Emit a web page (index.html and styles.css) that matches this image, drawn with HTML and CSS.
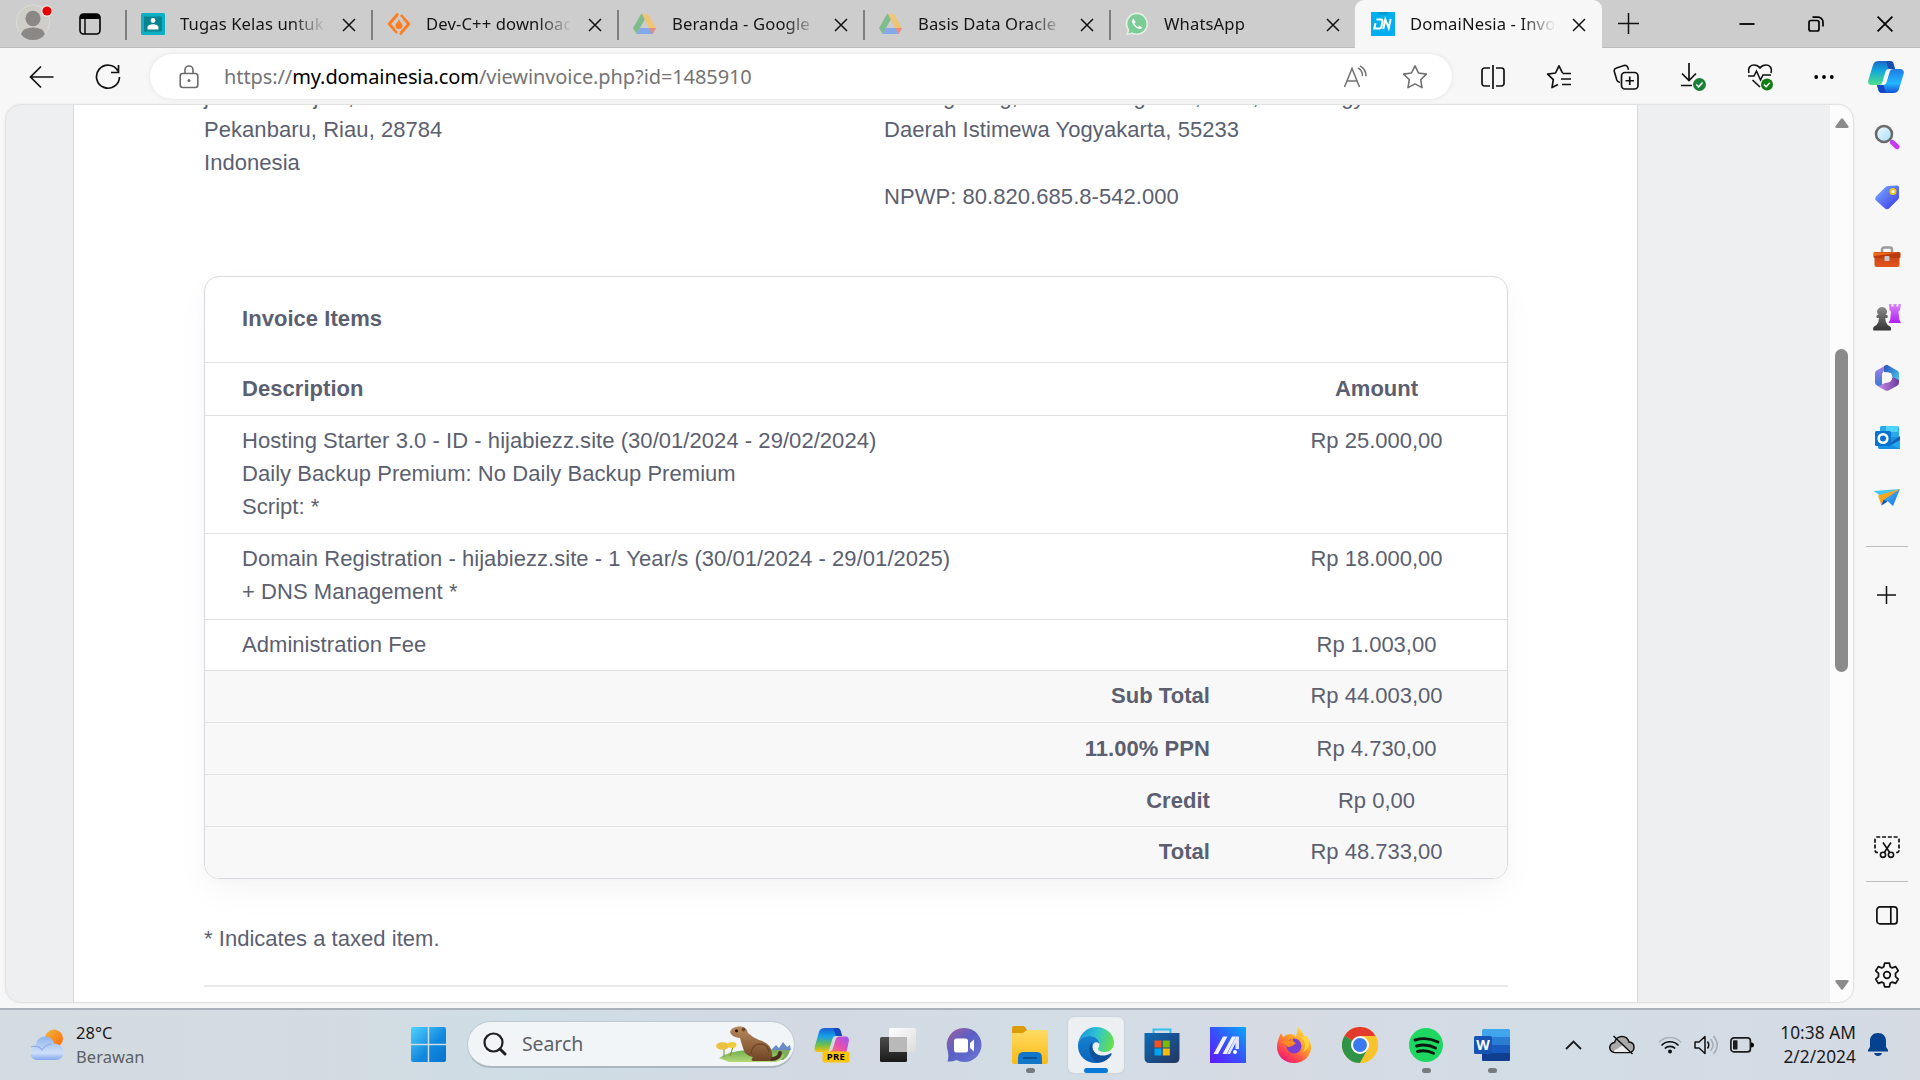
FILE: index.html
```html
<!DOCTYPE html>
<html lang="en">
<head>
<meta charset="utf-8">
<title>DomaiNesia - Invoice</title>
<link rel="stylesheet" href="styles.css">
</head>
<body>
<svg class="defs" width="0" height="0" aria-hidden="true">
  <defs>
    <symbol id="x" viewBox="0 0 14 14"><path d="M1 1l12 12M13 1L1 13" stroke="#111" stroke-width="1.5" fill="none"/></symbol>
    <symbol id="drive" viewBox="0 0 24 22"><path d="M8 1h7L7 15l-3.500 6L0 15z" fill="#7fbb8c"/><path d="M9 1h6l8 14h-7.200z" fill="#eec576"/><path d="M7 15h16l-3.500 6h-16z" fill="#85a9e8"/><path d="M16 15h7l-3.500 6z" fill="#e78c80"/><path d="M11.600 7.500l4.200 7.500H7.200z" fill="#cdcdcd"/></symbol>
    <linearGradient id="gCopA" x1="0" y1="0" x2="0" y2="1"><stop offset="0" stop-color="#1b66c9"/><stop offset=".4" stop-color="#10a7dc"/><stop offset="1" stop-color="#4fe08a"/></linearGradient>
    <linearGradient id="gCopB" x1="0" y1="0" x2="0" y2="1"><stop offset="0" stop-color="#1f7be6"/><stop offset=".6" stop-color="#22b6ff"/><stop offset="1" stop-color="#1550d4"/></linearGradient>
    <linearGradient id="gPreA" x1="0" y1="0" x2="0" y2="1"><stop offset="0" stop-color="#1a5fd8"/><stop offset=".35" stop-color="#16a0e8"/><stop offset=".7" stop-color="#6cbf4a"/><stop offset="1" stop-color="#fbc40a"/></linearGradient>
    <linearGradient id="gPreB" x1="1" y1="0" x2="0" y2="1"><stop offset="0" stop-color="#9a55f5"/><stop offset=".5" stop-color="#e550b0"/><stop offset="1" stop-color="#ff8a4a"/></linearGradient>
    <linearGradient id="gTag" x1="0" y1="0" x2="1" y2="1"><stop offset="0" stop-color="#7db4ff"/><stop offset="1" stop-color="#3a32e8"/></linearGradient>
    <linearGradient id="gGlass" x1="0" y1="0" x2="1" y2="1"><stop offset="0" stop-color="#f2fbff"/><stop offset="1" stop-color="#a9dcf7"/></linearGradient>
    <linearGradient id="gBox" x1="0" y1="0" x2="0" y2="1"><stop offset="0" stop-color="#c94215"/><stop offset="1" stop-color="#e2561f"/></linearGradient>
    <linearGradient id="gPawn" x1="0" y1="0" x2="0" y2="1"><stop offset="0" stop-color="#8c8c8c"/><stop offset="1" stop-color="#333"/></linearGradient>
    <linearGradient id="gRook" x1="0" y1="0" x2="0" y2="1"><stop offset="0" stop-color="#d985f5"/><stop offset="1" stop-color="#b01ff5"/></linearGradient>
    <linearGradient id="gM1" x1="0" y1="0" x2="0" y2="1"><stop offset="0" stop-color="#b07fe0"/><stop offset="1" stop-color="#2a7ad8"/></linearGradient>
    <linearGradient id="gM2" x1="0" y1="0" x2="1" y2="1"><stop offset="0" stop-color="#2a50b8"/><stop offset="1" stop-color="#48d0f5"/></linearGradient>
    <linearGradient id="gM3" x1="0" y1="0" x2="1" y2="0"><stop offset="0" stop-color="#c98ae6"/><stop offset="1" stop-color="#6a3aa0"/></linearGradient>
    <linearGradient id="gPlane" x1="0" y1="0" x2="1" y2="1"><stop offset="0" stop-color="#45c6f5"/><stop offset="1" stop-color="#1f6ee8"/></linearGradient>
    <linearGradient id="gSun" x1="0" y1="0" x2="1" y2="1"><stop offset="0" stop-color="#f2b53a"/><stop offset="1" stop-color="#fb6a0a"/></linearGradient>
    <linearGradient id="gCloud" x1="0" y1="0" x2="0" y2="1"><stop offset="0" stop-color="#8fb4ee"/><stop offset=".7" stop-color="#cfdff8"/><stop offset="1" stop-color="#82a8ee"/></linearGradient>
    <linearGradient id="gWin" gradientUnits="userSpaceOnUse" x1="0" y1="0" x2="35" y2="35"><stop offset="0" stop-color="#4fd3ff"/><stop offset=".55" stop-color="#138bdf"/><stop offset="1" stop-color="#0672cf"/></linearGradient>
    <linearGradient id="gChat" x1="0" y1="0" x2="1" y2="1"><stop offset="0" stop-color="#a05f9c"/><stop offset=".45" stop-color="#5b5fc4"/><stop offset="1" stop-color="#6878d6"/></linearGradient>
    <linearGradient id="gFold" x1="0" y1="0" x2="0" y2="1"><stop offset="0" stop-color="#ffdc63"/><stop offset="1" stop-color="#fbb917"/></linearGradient>
    <linearGradient id="gEdge1" x1="0" y1=".3" x2="1" y2=".5"><stop offset="0" stop-color="#1793e0"/><stop offset=".5" stop-color="#2fc4d0"/><stop offset="1" stop-color="#67e04a"/></linearGradient>
    <linearGradient id="gEdge2" x1="0" y1="0" x2="0" y2="1"><stop offset="0" stop-color="#1583cf"/><stop offset="1" stop-color="#0a62bb"/></linearGradient>
    <linearGradient id="gStore" x1="0" y1="0" x2="1" y2="1"><stop offset="0" stop-color="#0f6bb8"/><stop offset="1" stop-color="#253560"/></linearGradient>
    <linearGradient id="gAsus" x1="1" y1="0" x2="0" y2="1"><stop offset="0" stop-color="#06aaff"/><stop offset=".5" stop-color="#3553fb"/><stop offset="1" stop-color="#6218fa"/></linearGradient>
    <linearGradient id="gFox" x1=".9" y1="0" x2=".2" y2="1"><stop offset="0" stop-color="#fff04a"/><stop offset=".45" stop-color="#ff9a2a"/><stop offset=".8" stop-color="#ff3a55"/><stop offset="1" stop-color="#e31587"/></linearGradient>
    <linearGradient id="gHog" x1="0" y1="0" x2="0" y2="1"><stop offset="0" stop-color="#b98b60"/><stop offset="1" stop-color="#6f4424"/></linearGradient>
    <linearGradient id="gHill" x1="0" y1="0" x2="0" y2="1"><stop offset="0" stop-color="#6fae4e"/><stop offset="1" stop-color="#b5d878"/></linearGradient>
    <linearGradient id="gDark" x1="0" y1="0" x2="0" y2="1"><stop offset="0" stop-color="#4c4c4c"/><stop offset="1" stop-color="#1a1a1a"/></linearGradient>
    <linearGradient id="gLite" x1="0" y1="0" x2="1" y2="1"><stop offset="0" stop-color="#fff"/><stop offset="1" stop-color="#dcdcdc"/></linearGradient>
  </defs>
</svg>

<div class="screen">
  <header class="tabs">
    <div class="profile"><svg width="36" height="42" viewBox="0 0 36 42"><defs><clipPath id="av"><ellipse cx="17" cy="22" rx="16" ry="19.500"/></clipPath></defs><ellipse cx="17" cy="22" rx="16.500" ry="17" fill="#cfcdc8" stroke="#dddcd9"/><ellipse cx="17" cy="18.500" rx="7.600" ry="7.700" fill="#8a8784"/><path d="M5 34q2-6.500 12-6.500T29 34q-4 6-12 6T5 34z" fill="#8a8784"/><circle cx="31" cy="11" r="5.800" fill="#eee"/><circle cx="31" cy="11" r="4.600" fill="#e60000"/></svg></div>
    <div class="workspaces"><svg width="22" height="22" viewBox="0 0 22 22"><rect x="1" y="1" width="20" height="20" rx="3.500" fill="none" stroke="#000" stroke-width="1.600"/><path d="M1 6V4a3 3 0 0 1 3-3h14a3 3 0 0 1 3 3v2z"/><path d="M6 6v15" stroke="#000" stroke-width="1.400"/></svg></div>
    <div class="tab"><svg class="fav" width="24" height="22" viewBox="0 0 24 22"><rect width="24" height="22" rx="1.500" fill="#0cb0c4"/><rect x="3" y="3.500" width="18" height="15" fill="#078391"/><circle cx="12" cy="7.500" r="2.400" fill="#fff"/><path d="M6.500 16.500v-2c0-2 3-3.200 5.500-3.200s5.500 1.200 5.500 3.200v2z" fill="#fff"/></svg><span class="title">Tugas Kelas untuk XI</span><svg class="close"><use href="#x"/></svg></div>
    <div class="tab"><svg class="fav" width="24" height="24" viewBox="0 0 24 24"><path d="M10 3.500L2.500 12l4.500 5M11 1.500L2 12l8 9M14 20.500l7.500-8.500-4.500-5M13 22.500L22 12l-8-9" fill="none" stroke="#ff7d1f" stroke-width="2.600"/><path d="M12 7c.5 3 3.500 4 3.500 6.500a3.500 3.500 0 0 1-7 0C8.500 11 11.500 10 12 7z" fill="#ff7d1f"/></svg><span class="title">Dev-C++ download</span><svg class="close"><use href="#x"/></svg></div>
    <div class="tab"><svg class="fav" width="24" height="22"><use href="#drive"/></svg><span class="title">Beranda - Google Drive</span><svg class="close"><use href="#x"/></svg></div>
    <div class="tab"><svg class="fav" width="24" height="22"><use href="#drive"/></svg><span class="title">Basis Data Oracle - Go</span><svg class="close"><use href="#x"/></svg></div>
    <div class="tab"><svg class="fav" width="24" height="24" viewBox="0 0 24 24"><path d="M12 .5a11.300 11.300 0 1 1-5.300 21.400L1 23.500l1.700-5.300A11.300 11.300 0 0 1 12 .5z" fill="#e3efe6"/><path d="M12 2.300a9.600 9.600 0 1 1-5 17.900l-3.800 1.200L4.400 17.700A9.600 9.600 0 0 1 12 2.300z" fill="#7dcb96"/><path d="M8.500 6.500c-2.500 1.500-1.500 5 1.300 7.800s6.300 3.800 7.400 1.200l-2.800-1.600-1.300 1.300c-1.700-.7-3-2-3.700-3.600l1.200-1.300z" fill="#fff"/></svg><span class="title">WhatsApp</span><svg class="close"><use href="#x"/></svg></div>
    <div class="tab active"><svg class="fav" width="24" height="24" viewBox="0 0 24 24"><rect width="24" height="24" fill="#03aef0"/><path d="M7 0h10l-1 2.500H8z" fill="#0999c9"/><path d="M5.500 7.500h4.500a1.500 1.500 0 0 1 1.500 2l-1.200 5.500a2 2 0 0 1-2 1.500H3.300l1.200-5.500M12.300 17l2-9.500 3.400 8.500 2-9" fill="none" stroke="#fff" stroke-width="2"/></svg><span class="title">DomaiNesia - Invoice</span><svg class="close"><use href="#x"/></svg></div>
    <div class="newtab"><svg width="21" height="21" viewBox="0 0 21 21"><path d="M10.500 0v21M0 10.500h21" stroke="#111" stroke-width="1.500"/></svg></div>
    <div class="wincontrols">
      <svg width="16" height="16" viewBox="0 0 16 16"><path d="M0.500 8h15" stroke="#000" stroke-width="1.800"/></svg>
      <svg width="16" height="16" viewBox="0 0 16 16"><rect x="1" y="4.500" width="10" height="10.500" rx="2" fill="none" stroke="#000" stroke-width="1.700"/><path d="M4.500 1.200h5.500a5 5 0 0 1 5 5v4.300" fill="none" stroke="#000" stroke-width="1.700"/></svg>
      <svg width="16" height="16" viewBox="0 0 14 14"><path d="M.5.5l13 13M13.500.5l-13 13" stroke="#000" stroke-width="1.500"/></svg>
    </div>
  </header>

  <nav class="toolbar">
    <svg class="back" width="25" height="24" viewBox="0 0 25 24"><path d="M24.500 12H1.500M12 1.500L1.500 12 12 22.500" fill="none" stroke="#111" stroke-width="1.700"/></svg>
    <svg class="reload" width="26" height="26" viewBox="0 0 26 26"><path d="M23 7A11.500 11.500 0 1 0 24.500 13M23.500 1v7.500H16" fill="none" stroke="#111" stroke-width="1.700"/></svg>
    <div class="address">
      <svg width="20" height="24" viewBox="0 0 20 24"><rect x="1.200" y="8.500" width="17.600" height="14" rx="2.500" fill="none" stroke="#6b6b6b" stroke-width="1.600"/><path d="M6 8.500V5a4 4 0 0 1 8 0v3.500" fill="none" stroke="#6b6b6b" stroke-width="1.600"/><circle cx="10" cy="15.500" r="1.500" fill="#6b6b6b"/></svg>
      <span class="url">https://<b>my.domainesia.com</b>/viewinvoice.php?id=1485910</span>
      <svg class="read" width="26" height="24" viewBox="0 0 26 24"><path d="M1.500 22L9 3.500 16.500 22M4 16h10M15 3c3 1.500 4.500 4 4.500 8M17 .8c4 2 6 5.500 6 10.500" fill="none" stroke="#707070" stroke-width="1.500"/></svg>
      <svg class="star" width="26" height="26" viewBox="0 0 26 26"><path d="M13 1.800l3.500 7.200 7.900 1.100-5.700 5.600 1.300 7.900-7-3.700-7 3.700 1.300-7.900L1.600 10.100 9.500 9z" fill="none" stroke="#707070" stroke-width="1.600" stroke-linejoin="round"/></svg>
    </div>
    <div class="tools">
      <svg width="24" height="24" viewBox="0 0 24 24"><path d="M9 3H3.500A2.500 2.500 0 0 0 1 5.500v13A2.500 2.500 0 0 0 3.500 21H9M15 3h5.500A2.500 2.500 0 0 1 23 5.500v13a2.500 2.500 0 0 1-2.500 2.500H15M12 0v24" fill="none" stroke="#111" stroke-width="1.700"/></svg>
      <svg width="26" height="26" viewBox="0 0 26 26"><path d="M16.500 9L13 1.800 9.500 9 1.600 10.100l5.700 5.600L6 23.600l6-3.200M16.500 9.500H25M15 15h10M16 20.500h9" fill="none" stroke="#111" stroke-width="1.700" stroke-linejoin="round"/></svg>
      <svg width="26" height="26" viewBox="0 0 26 26"><path d="M7 18.500c-2-.2-2.700-1-3.200-2.500L1.300 7.500C.8 5.700 1.500 4.500 3.500 3.900l7.500-2.300c2-.6 3.300.2 3.800 1.900l.7 2.200" fill="none" stroke="#111" stroke-width="1.600"/><rect x="8.500" y="8.500" width="16.500" height="16.500" rx="3.500" fill="none" stroke="#111" stroke-width="1.700"/><path d="M16.750 12.500v8.500M12.500 16.750H21" stroke="#111" stroke-width="1.700"/></svg>
      <svg width="26" height="30" viewBox="0 0 26 30"><path d="M9 1v17M2 11.500L9 18.500l7-7M1 23.500h11" fill="none" stroke="#111" stroke-width="1.700"/><circle cx="19.500" cy="22.500" r="6.500" fill="#1a7f37"/><path d="M16.300 22.500l2.300 2.300 4-4.300" fill="none" stroke="#fff" stroke-width="1.600"/></svg>
      <svg width="26" height="28" viewBox="0 0 26 28"><path d="M2 10C.5 4 4 2 7 2c2.500 0 4.500 1 6 3 1.500-2 3.500-3 6-3 3 0 6.500 2 5 8M1 13h6l2.500-5 4 9 2.500-5h8M5.500 17l7.500 7" fill="none" stroke="#111" stroke-width="1.600"/><circle cx="20" cy="21.500" r="6" fill="#107c10"/><path d="M17 21.500l2.200 2.200 3.700-4" fill="none" stroke="#fff" stroke-width="1.500"/></svg>
      <svg width="20" height="6" viewBox="0 0 20 6"><circle cx="2.200" cy="3" r="1.900"/><circle cx="10" cy="3" r="1.900"/><circle cx="17.800" cy="3" r="1.900"/></svg>
    </div>
    <svg class="copilot" width="36" height="32" viewBox="0 0 36 32"><path d="M11 0h11c2 0 3 1 3.600 3L27 8h-6c-2 0-3 1-3.600 3l-3 10c-.6 2-1.500 3-4 3H4c-3 0-4.500-2-3.600-5L5 4c.8-2.700 2.500-4 6-4z" fill="url(#gCopA)"/><path d="M18 0h4c2 0 3 1 3.600 3L27 8h-6.500z" fill="#174fae"/><path d="M25 32H14c-2 0-3-1-3.600-3L9 24h6c2 0 3-1 3.600-3l3-10c.6-2 1.500-3 4-3H32c3 0 4.500 2 3.600 5L31 28c-.8 2.700-2.500 4-6 4z" fill="url(#gCopB)"/><path d="M18 32h-4c-2 0-3-1-3.600-3L9 24h6.500z" fill="#1446c8"/></svg>
  </nav>

  <div class="main">
    <div class="viewport">
      <div class="page">
        <div class="addresses">
          <div class="addr from">jalan datar jalu,<br>Pekanbaru, Riau, 28784<br>Indonesia</div>
          <div class="addr to">Karangerung, Dusun Bangunan, Jetis, Kota Yogyakarta<br>Daerah Istimewa Yogyakarta, 55233<br><br>NPWP: 80.820.685.8-542.000</div>
        </div>
        <section class="card">
          <h2>Invoice Items</h2>
          <div class="row head"><div>Description</div><div class="amount">Amount</div></div>
          <div class="row r3"><div>Hosting Starter 3.0 - ID - hijabiezz.site (30/01/2024 - 29/02/2024)<br>Daily Backup Premium: No Daily Backup Premium<br>Script: *</div><div class="amount">Rp 25.000,00</div></div>
          <div class="row r2"><div>Domain Registration - hijabiezz.site - 1 Year/s (30/01/2024 - 29/01/2025)<br>+ DNS Management *</div><div class="amount">Rp 18.000,00</div></div>
          <div class="row r1"><div>Administration Fee</div><div class="amount">Rp 1.003,00</div></div>
          <div class="row sum"><div>Sub Total</div><div class="amount">Rp 44.003,00</div></div>
          <div class="row sum tall"><div>11.00% PPN</div><div class="amount">Rp 4.730,00</div></div>
          <div class="row sum tall"><div>Credit</div><div class="amount">Rp 0,00</div></div>
          <div class="row sum last"><div>Total</div><div class="amount">Rp 48.733,00</div></div>
        </section>
        <p class="note">* Indicates a taxed item.</p>
        <hr>
      </div>
      <div class="scrollbar">
        <svg width="14" height="10" viewBox="0 0 14 10"><path d="M6 .7q1-1 2 0l5.500 7.600q.5 1.500-1 1.700h-11Q0 9.800.5 8.300z" fill="#8b8b8b"/></svg>
        <div class="thumb"></div>
        <svg width="14" height="10" viewBox="0 0 14 10"><path d="M6 9.300q1 1 2 0l5.500-7.600Q14 .2 12.500 0h-11Q0 .2.500 1.700z" fill="#8b8b8b"/></svg>
      </div>
    </div>
    <aside class="sidebar">
      <div class="app"><svg width="26" height="26" viewBox="0 0 26 26"><path d="M16.500 16.500l2 2" stroke="#777" stroke-width="2.500"/><path d="M18.500 18.500l4.500 4.200" stroke="#c63af5" stroke-width="5" stroke-linecap="round"/><circle cx="10" cy="10" r="8" fill="url(#gGlass)" stroke="#6b6b6b" stroke-width="2.600"/></svg></div>
      <div class="app"><svg width="26" height="26" viewBox="0 0 26 26"><path d="M14 2l9-.5q2 0 2 2V13q0 1.500-1 2.500l-9 9q-2 1.500-4 0L2 16.500q-1.500-2 0-4l9-9q1-1.300 3-1.500z" fill="url(#gTag)"/><circle cx="19" cy="7.500" r="2.500" fill="#fff" stroke="#f5c518" stroke-width="2"/></svg></div>
      <div class="app"><svg width="28" height="22" viewBox="0 0 28 22"><path d="M9 6V3.500A2 2 0 0 1 11 1.500h6a2 2 0 0 1 2 2V6" fill="none" stroke="#9b9b9b" stroke-width="2.400"/><rect x="1.500" y="9" width="25" height="12" rx="2" fill="url(#gBox)"/><rect x=".5" y="6" width="27" height="6" rx="1.500" fill="#bb3a10"/><path d="M1 6.500h25L1 10z" fill="#ee6c1c"/><rect x="11.500" y="10" width="5" height="5" rx=".8" fill="#c5c8ca"/></svg></div>
      <div class="app"><svg width="28" height="28" viewBox="0 0 28 28"><path d="M16 1h2.500v2.500h2V1h3v2.500h2V1H28l-1 6-1.500 1.500.8 8L28 20H15.500l1.700-3.500.8-8L16.500 7z" fill="url(#gRook)"/><path d="M9 4a4.700 4.700 0 0 1 3.600 8h1.600q1.300 1.500 0 3h-2q0 4 2.500 7l2.500 1.500q1.500 1.500.5 4H.5q-1-2.500.5-4L3.500 22Q6 19 6 15H4q-1.300-1.500 0-3h1.500A4.700 4.700 0 0 1 9 4z" fill="url(#gPawn)"/></svg></div>
      <div class="app"><svg width="26" height="27" viewBox="0 0 26 27"><path d="M13 .8L2.500 6.500Q1 7.500 1 9v9.500q0 2 2 3l5 2.500V10z" fill="url(#gM1)"/><path d="M10 2L13 .8l10.500 6Q25 7.700 25 9.500V18l-6-3.500-2-5.500-7-1z" fill="url(#gM2)"/><path d="M4 22.500l7.500 4q1.500.6 3 0l9-5q1.500-1 1.500-3V16l-6-3-3 5-5 1z" fill="url(#gM3)"/><circle cx="13" cy="13.500" r="5" fill="#f7f7f7"/></svg></div>
      <div class="app"><svg width="26" height="25" viewBox="0 0 26 25"><rect x="6" y="1" width="19" height="13" rx="1.500" fill="#2ba8e8"/><path d="M12 1h12v6H12z" fill="#4fd2fb"/><path d="M4 12h22v12H5.500Q4 24 4 22z" fill="#1690e0"/><path d="M26 11L15 19l11 5z" fill="#155fae"/><path d="M17 20l9-5v9z" fill="#22a8ee"/><rect x="1" y="6" width="16" height="15" rx="1.500" fill="#0673d0"/><circle cx="9" cy="13.500" r="4.300" fill="none" stroke="#fff" stroke-width="2.600"/></svg></div>
      <div class="app"><svg width="28" height="19" viewBox="0 0 28 19"><path d="M.5 3L27 1 8 8z" fill="#45c6f5"/><path d="M27 1L20 18l-5.500-5L8 17l2-7z" fill="url(#gPlane)"/><path d="M5 7.500L27 1 10.500 12 8.500 17.500z" fill="#f8a61b"/><path d="M10.500 12l4 1.500-6 4z" fill="#1a4fb8"/></svg></div>
      <div class="divider"></div>
      <div class="add"><svg width="19" height="18" viewBox="0 0 19 18"><path d="M9.500 0v18M0 9h19" stroke="#111" stroke-width="1.500"/></svg></div>
      <div class="foot">
        <svg width="26" height="23" viewBox="0 0 26 23"><path d="M4 16.500H3.500A2.500 2.500 0 0 1 1 14V3.500A2.500 2.500 0 0 1 3.500 1h19A2.500 2.500 0 0 1 25 3.500V14a2.500 2.500 0 0 1-2.500 2.500H22" fill="none" stroke="#111" stroke-width="1.700" stroke-dasharray="4 1.800"/><circle cx="9" cy="18.800" r="2.600" fill="none" stroke="#111" stroke-width="1.600"/><circle cx="17" cy="18.800" r="2.600" fill="none" stroke="#111" stroke-width="1.600"/><path d="M10.300 16.500L17 6.500M15.700 16.500L9 6.500" stroke="#111" stroke-width="1.600"/></svg>
        <div class="divider"></div>
        <svg class="panel" width="22" height="19" viewBox="0 0 22 19"><rect x=".9" y=".9" width="20.200" height="17" rx="3" fill="none" stroke="#111" stroke-width="1.700"/><path d="M14.800 1v17" stroke="#111" stroke-width="1.700"/></svg>
        <svg width="26" height="26" viewBox="0 0 26 26"><path d="M10.600 1.200h4.800l.8 3.600 2 1.100 3.500-1.300 2.500 4.200-2.700 2.600v3.200l2.700 2.600-2.500 4.200-3.500-1.300-2 1.100-.8 3.600h-4.800l-.8-3.600-2-1.100-3.500 1.300-2.500-4.200 2.700-2.600v-3.200L1.800 8.800l2.500-4.200 3.500 1.300 2-1.100z" fill="none" stroke="#111" stroke-width="1.700" stroke-linejoin="round"/><circle cx="13" cy="13" r="3.300" fill="none" stroke="#111" stroke-width="1.700"/></svg>
      </div>
    </aside>
  </div>

  <footer class="taskbar">
    <div class="weather">
      <svg width="37" height="32" viewBox="0 0 37 32"><circle cx="26" cy="9.500" r="9" fill="url(#gSun)"/><path d="M8 31a7 7 0 0 1-.5-13.500C8 11 12 7.500 17 7.500c4.500 0 8 2.500 9 7 5 .5 9.500 3 9.500 8.500 0 5-3 8-8 8z" fill="url(#gCloud)"/><path d="M3 18q7-2.500 11 3 3-5 10-6.500" fill="none" stroke="#8aabe8" stroke-width="1.200"/></svg>
      <div class="wtext"><span class="deg">28°C</span><span class="cond">Berawan</span></div>
    </div>
    <svg class="start" width="35" height="35" viewBox="0 0 35 35"><path d="M2 0h14.700v16.700H0V2a2 2 0 0 1 2-2zM18.200 0H33a2 2 0 0 1 2 2v14.700H18.200zM0 18.200h16.700V35H2a2 2 0 0 1-2-2zM18.200 18.200H35V33a2 2 0 0 1-2 2H18.200z" fill="url(#gWin)"/></svg>
    <div class="search">
      <svg width="24" height="24" viewBox="0 0 24 24"><circle cx="10.500" cy="10.500" r="9" fill="none" stroke="#1f1f1f" stroke-width="2.200"/><path d="M17 17l5 5" stroke="#1f1f1f" stroke-width="3" stroke-linecap="round"/></svg>
      <span>Search</span>
      <svg class="hog" width="76" height="37" viewBox="0 0 76 37"><path d="M56 24l5-5 3 3 4-6 4 5 3-2 1 5z" fill="#6a8bc9"/><path d="M56 24h19q-1 6-7 10H52z" fill="#7cab5c"/><path d="M4 32Q14 25 32 24t38 4q-1 5-9 8H14z" fill="url(#gHill)"/><path d="M9 22v9M18 21l-3 9" stroke="#7a8a30"/><ellipse cx="7.500" cy="20" rx="6.500" ry="3.800" fill="#ecc045"/><ellipse cx="17" cy="19" rx="4.500" ry="3" fill="#f2cb3c"/><path d="M56 33q8 0 9-6" stroke="#49301f" stroke-width="4" fill="none" stroke-linecap="round"/><path d="M15 6q1-4 6-5 5-2 9 1 2 1 3 5 4 4 11 7 12 3 13 13 1 5-3 8H38q-3-1 0-4-8-1-10-9-2-6-3-10-9-1-10-6z" fill="url(#gHog)"/><path d="M36 28q1-10 9-10 8 0 9 8" fill="none" stroke="#6c4628" stroke-width="1.300"/><circle cx="21.500" cy="4.800" r="1.600" fill="#2b1a10"/><circle cx="28.500" cy="3.500" r="2" fill="#704a30"/></svg>
    </div>
    <div class="apps">
      <div class="slot"><svg width="36" height="36" viewBox="0 0 36 36"><path d="M11 1h12c2 0 3 1 3.600 3L28 9h-6c-2 0-3 1-3.600 3l-3 10c-.6 2-1.500 3-4 3H4c-3 0-4-2-3.300-5L5 5c.8-2.700 2.500-4 6-4z" fill="url(#gPreA)"/><path d="M14 25q4 0 5-4l2.500-8c.6-2 1.500-3.500 4-3.500H31c3 0 4.500 2 3.800 5L32 27H14z" fill="url(#gPreB)"/><path d="M19 1h4q3 0 4 4l1 4h-6q-2-6-3-8z" fill="#1648c0"/><rect x="8.500" y="24.500" width="27" height="11" rx="2" fill="#fcc60c"/><text x="22" y="33.300" class="pre">PRE</text></svg></div>
      <div class="slot"><svg width="36" height="36" viewBox="0 0 36 36"><rect x="0" y="10" width="27" height="25" rx="1.500" fill="url(#gDark)"/><rect x="9" y="1" width="27" height="24" rx="1.500" fill="url(#gLite)"/><path d="M9 10h18v15H9z" fill="#b9b9b9"/></svg></div>
      <div class="slot"><svg width="36" height="36" viewBox="0 0 36 36"><path d="M18 1a17 17 0 1 1-7.500 32Q6 35 1.500 34.500 3 30.500 1.800 24A17 17 0 0 1 18 1z" fill="url(#gChat)"/><rect x="8" y="11.500" width="14" height="14" rx="2.500" fill="#fff"/><path d="M24 16l4-3.500v12L24 21z" fill="#fff"/></svg></div>
      <div class="slot run"><svg width="36" height="38" viewBox="0 0 36 38"><path d="M0 2Q0 0 2 0h9q1.500 0 2.500 1.500L15 4v5H0z" fill="#dc9b08"/><path d="M0 7h11l4-3h19q2 0 2 2v30q0 2-2 2H2q-2 0-2-2z" fill="url(#gFold)"/><path d="M6 38v-6q0-6 5-6h14q5 0 5 6v6z" fill="#1277cb"/><path d="M11 32h14" stroke="#0b4d92" stroke-width="1.800"/></svg></div>
      <div class="slot current"><svg width="36" height="36" viewBox="0 0 36 36"><path d="M0 18C1 7 9 0 18 0c10 0 18 7 18 15.500C36 22 31 25 27 25c-4 0-7-1.500-7-3 0-1 1.500-2 1.500-4.500C21 12 16 9 11 9 5 9 1 12 0 18z" fill="url(#gEdge1)"/><path d="M0 18C.5 12 5 9 11 9c5 0 10 2.500 10.500 8-2-3-7-2.500-7 3C15 27 22 31 30 28.500 26 34 22 36 17.500 36 8 36-.5 29 0 18z" fill="url(#gEdge2)"/><path d="M14 15c-4 4-4 15 6.500 20.800C26 35.500 31 32 33.500 27.500c.5-1-.5-1.500-1.200-1C25 31 14 28 14 19z" fill="#10509c"/></svg></div>
      <div class="slot"><svg width="36" height="36" viewBox="0 0 36 36"><path d="M9.500 8V2.500h17V8" fill="none" stroke="#35bff0" stroke-width="2"/><path d="M.5 6h35v25q0 5-5 5H5.500q-5 0-5-5z" fill="url(#gStore)"/><path d="M10.500 13.500h7v7h-7z" fill="#f25022"/><path d="M18.800 13.500h7v7h-7z" fill="#7fba00"/><path d="M10.500 21.500h7v7h-7z" fill="#00a4ef"/><path d="M18.800 21.500h7v7h-7z" fill="#ffb900"/></svg></div>
      <div class="slot"><svg width="36" height="36" viewBox="0 0 36 36"><rect width="36" height="36" fill="url(#gAsus)"/><path d="M3.500 27L13 9.500h4.500L8 27zM12.500 27L22 9.500h4L16.500 27z" fill="#fff" opacity=".92"/><path d="M29 9.500V22h-3.500V16L20 27h-3l9-17.500z" fill="#dfe3ff"/><circle cx="25" cy="25" r="2" fill="#fff"/></svg></div>
      <div class="slot"><svg width="36" height="36" viewBox="0 0 36 36"><path d="M22 0q5 5 6 9 5 2 7 9c1 10-6 18-17 18C8 36 1 29 1 20q0-6 4-14l2 4q4-3 7-3 4 0 6 3z" fill="url(#gFox)"/><circle cx="18" cy="19" r="7.500" fill="#7a3fd0"/><path d="M4 15q5-1 8-1 3-1 5-3-1 4 3 5-4 4-8 4-3-4-8-5z" fill="#ff8b20"/><path d="M25 10q7 6 2 15c6-3 8-9 4-16z" fill="#ffd53a"/></svg></div>
      <div class="slot"><svg width="36" height="36" viewBox="0 0 36 36"><circle cx="18" cy="18" r="18" fill="#f9c32c"/><path d="M18 18L2.400 9A18 18 0 0 1 33.600 9z" fill="#e23b2e"/><path d="M2.400 9A18 18 0 0 0 18 36l7.500-13.500L18 18z" fill="#2f9447"/><path d="M18 9h15.600A18 18 0 0 1 18 36l8-13.500z" fill="#f9c32c"/><circle cx="18" cy="18" r="9" fill="#fff"/><circle cx="18" cy="18" r="7" fill="#3b79ee"/></svg></div>
      <div class="slot run"><svg width="34" height="34" viewBox="0 0 34 34"><circle cx="17" cy="17" r="17" fill="#1ed760"/><path d="M6 12q12-3.500 23 2M7.500 18q10-2.800 19 2M8.500 23.500q8.500-2 16 1.800" fill="none" stroke="#0b1a10" stroke-width="2.900" stroke-linecap="round"/></svg></div>
      <div class="slot run"><svg width="36" height="34" viewBox="0 0 36 34"><rect x="8" y="1" width="28" height="32" rx="1.500" fill="#41a5ee"/><path d="M8 9h28v8H8z" fill="#2b7cd3"/><path d="M8 17h28v8H8z" fill="#185abd"/><path d="M8 25h28v6.500a1.500 1.500 0 0 1-1.500 1.500h-25A1.500 1.500 0 0 1 8 31.500z" fill="#103f91"/><rect x="0" y="8" width="18" height="18" rx="1.500" fill="#1753b3"/><text x="9" y="21.800" class="w">W</text></svg></div>
    </div>
    <div class="tray">
      <svg class="chev" width="17" height="10" viewBox="0 0 17 10"><path d="M1 9l7.500-7.500L16 9" fill="none" stroke="#1c1c1c" stroke-width="1.800"/></svg>
      <svg class="cloud" width="26" height="20" viewBox="0 0 26 20"><path d="M6 17.500a5 5 0 0 1-.5-10C6.500 4 9.500 1.500 13 1.500c3.500 0 6 2 7 5.500 3 .3 5 2.500 5 5.300 0 3-2.200 5.200-5 5.200z" fill="#a9a9a9" stroke="#111" stroke-width="1.500"/><path d="M5 16.500q0-2 3-2.500l6-4 8 6q-1 1-2 1H6z" fill="#ececec"/><path d="M4.500 1l19 18" stroke="#111" stroke-width="1.500"/></svg>
      <svg class="wifi" width="24" height="18" viewBox="0 0 24 18"><path d="M.8 6.500a15 15 0 0 1 22.400 0" fill="none" stroke="#aab2ba" stroke-width="1.500"/><path d="M3.500 9.500a11.500 11.500 0 0 1 17 0M6.800 12.500a7.300 7.300 0 0 1 10.400 0" fill="none" stroke="#111" stroke-width="1.700"/><circle cx="12" cy="15.500" r="2" fill="#111"/></svg>
      <svg class="vol" width="25" height="20" viewBox="0 0 25 20"><path d="M1 7h4l6-5.500v17L5 13H1z" fill="none" stroke="#111" stroke-width="1.500" stroke-linejoin="round"/><path d="M13.500 6.500q2.500 3.500 0 7" fill="none" stroke="#111" stroke-width="1.500"/><path d="M16.500 4q5 6 0 12M19.500 1q7.500 9 0 18" fill="none" stroke="#a5adb5" stroke-width="1.500"/></svg>
      <svg class="bat" width="24" height="16" viewBox="0 0 24 16"><rect x=".9" y=".9" width="19.500" height="14" rx="3" fill="none" stroke="#1c1c1c" stroke-width="1.700"/><rect x="3" y="3.300" width="4.500" height="9.200" rx=".8" fill="#1c1c1c"/><path d="M21 5.500q3 0 3 2.500t-3 2.500z"/></svg>
      <div class="clock"><span>10:38 AM</span><span>2/2/2024</span></div>
      <svg class="bell" width="20" height="23" viewBox="0 0 20 23"><path d="M10 0c5 0 8 3.500 8 8v6l2 3v1.500H0V17l2-3V8c0-4.500 3-8 8-8zM6 20h8q-1 3-4 3t-4-3z" fill="#04418f"/></svg>
    </div>
  </footer>
</div>
</body>
</html>
```
FILE: styles.css
```css
* { box-sizing: border-box; }
body { margin: 0; background: #f7f7f7; }
svg { display: block; flex: none; }
.defs { position: absolute; }

.screen {
  width: 1920px;
  height: 1080px;
  display: flex;
  flex-direction: column;
  overflow: hidden;
  font-family: "Noto Sans", "Open Sans", sans-serif;
}

/* tab strip */
.tabs {
  height: 48px;
  display: flex;
  background: #cdcdcd;
  border-bottom: 1px solid #bcbcbc;
}
.profile { width: 52px; padding: 0 0 0 16px; }
.workspaces { width: 73px; padding: 13px 0 0 27px; }
.tab {
  width: 246px;
  height: 48px;
  display: flex;
  align-items: center;
  padding-left: 15px;
  position: relative;
  border-left: 1px solid transparent;
}
.tab::before {
  content: "";
  position: absolute;
  left: -1px;
  top: 10px;
  width: 1.5px;
  height: 30px;
  background: #7f7f7f;
}
.tab.active {
  background: #f7f7f7;
  border-radius: 9px 9px 0 0;
  width: 247px;
}
.tab.active::before { display: none; }
.fav { margin-right: 15px; }
.title {
  width: 144px;
  height: 30px;
  line-height: 29px;
  overflow: hidden;
  white-space: nowrap;
  font-size: 16.6px;
  letter-spacing: .13px;
  color: #151515;
  mask-image: linear-gradient(90deg, #000 112px, transparent 146px);
}
.close { width: 14px; height: 14px; margin-left: 17.500px; margin-top: 2px; }
.newtab { width: 42px; padding: 13px 0 0 16px; }
.wincontrols { display: flex; gap: 53px; padding: 16px 0 0 95px; }

/* toolbar */
.toolbar { height: 56px; display: flex; align-items: center; padding-top: 1px; }
.back { margin-left: 29px; }
.reload { margin-left: 41px; }
.address {
  width: 1302px;
  height: 45px;
  margin-left: 29px;
  border-radius: 23px;
  background: #fff;
  box-shadow: 0 0 5px rgba(0, 0, 0, .09);
  display: flex;
  align-items: center;
  padding-left: 29px;
}
.url {
  width: 1119px;
  margin-left: 25px;
  font-size: 20px;
  letter-spacing: -.09px;
  line-height: 28px;
  color: #747474;
  white-space: nowrap;
}
.url b { font-weight: 400; color: #000; }
.star { margin-left: 33px; }
.tools { display: flex; align-items: center; width: 382px; padding-left: 29px; justify-content: space-between; }
.copilot { margin-left: 34px; }

/* browser body */
.main { height: 904px; display: flex; }
.viewport {
  width: 1849px;
  height: 899px;
  margin-left: 5px;
  border: 1px solid #e2e2e3;
  border-radius: 16px;
  overflow: hidden;
  display: flex;
  justify-content: space-between;
  background: #eeeff1;
  box-shadow: 0 0 2px rgba(0, 0, 0, .08);
}
.page {
  width: 1565px;
  margin-left: 67px;
  padding: 0 128px 0 130px;
  background: #fff;
  border-left: 1px solid #d9d9db;
  border-right: 1px solid #d9d9db;
  font-family: "Liberation Sans", Arial, sans-serif;
  font-size: 22px;
  line-height: 33.400px;
  color: #5b5f70;
}
.addresses { display: flex; margin-top: -25.500px; height: 196.500px; }
.addr { white-space: nowrap; letter-spacing: .05px; }
.from { width: 680px; }
.card {
  width: 1304px;
  height: 603px;
  border: 1px solid #d9d9e0;
  border-radius: 15px;
  overflow: hidden;
  box-shadow: 0 14px 34px rgba(30, 30, 50, .035), 0 3px 8px rgba(30, 30, 50, .02);
}
.card h2 { margin: 0; height: 85px; padding: 25px 37px 0; font-size: 22px; line-height: 33px; letter-spacing: .05px; }
.row {
  height: 51px;
  border-top: 1px solid #e1e2e6;
  display: flex;
  justify-content: space-between;
  padding: 8px 37px 0;
  line-height: 33px;
  white-space: nowrap;
}
.row > div:first-child { letter-spacing: .05px; }
.amount { width: 187px; text-align: center; }
.head { height: 53px; padding-top: 9px; font-weight: 700; }
.r3 { height: 118px; }
.r2 { height: 86px; }
.sum { height: 52px; justify-content: flex-end; background: #f8f8f9; }
.sum > div:first-child { font-weight: 700; margin-right: 73px; }
.tall { height: 52px; padding-top: 9px; }
.last { height: 53px; }
.note { margin: 43px 0 0; height: 63px; line-height: 33px; letter-spacing: .03px; }
.page hr { margin: 0; border: 0; border-top: 2px solid #e8eaed; width: 1304px; }
.scrollbar {
  width: 23px;
  background: #fcfcfc;
  display: flex;
  flex-direction: column;
  align-items: center;
  padding: 13px 0 12px;
  margin-left: auto;
}
.thumb { width: 13px; height: 323px; margin: 221px 0 auto; border-radius: 7px; background: #8b8b8b; }

.sidebar { width: 65px; display: flex; flex-direction: column; align-items: center; padding-top: 3px; }
.app { height: 60.100px; flex: none; display: flex; align-items: center; }
.divider { width: 42px; height: 1px; flex: none; background: #bcbcbc; }
.app + .divider { margin-top: 18px; }
.add { margin-top: 39px; }
.foot { margin-top: auto; display: flex; flex-direction: column; align-items: center; padding-bottom: 20px; }
.foot .divider { margin-top: 22px; }
.panel { margin: 24px 0 37px; }

/* taskbar */
.taskbar {
  height: 72px;
  border-top: 2px solid #a9b2ba;
  background: linear-gradient(90deg, #d3dce0 0, #d4dbe2 14%, #cfdde5 27%, #d3d9e2 43%, #d2dde6 54%, #d6dae3 66%, #d2dde6 80%, #d5dae3 100%);
  display: flex;
  align-items: center;
  padding-bottom: 1px;
}
.weather { width: 411px; padding-left: 28px; display: flex; align-items: center; gap: 11px; }
.wtext { display: flex; flex-direction: column; font-size: 16.500px; line-height: 24px; letter-spacing: .05px; }
.deg { color: #1b1b1b; }
.cond { color: #5b6064; }
.search {
  width: 328px;
  height: 47px;
  margin-left: 21px;
  border: 1.500px solid #bccad3;
  border-bottom: 2px solid #abb6be;
  border-radius: 24px;
  background: #f1f5f8;
  display: flex;
  align-items: center;
  padding-left: 15px;
  font-size: 19.500px;
  color: #5d6164;
}
.search span { width: 66px; margin-left: 15px; letter-spacing: -.1px; line-height: 26px; }
.hog { margin-left: 127px; }
.apps { display: flex; margin-left: 4px; }
.slot { width: 66px; height: 56px; display: flex; align-items: center; justify-content: center; position: relative; }
.slot svg { position: relative; }
.current::before {
  content: "";
  position: absolute;
  left: 5px;
  top: 0;
  width: 56px;
  height: 56px;
  border-radius: 6px;
  background: #ecf0f3;
  box-shadow: 0 0 2px #b7bfc7;
}
.run::after, .current::after {
  content: "";
  position: absolute;
  bottom: 0;
  left: 28.500px;
  width: 9px;
  height: 5px;
  border-radius: 3px;
  background: #767b80;
}
.current::after { left: 21px; width: 24px; background: #0a7ad8; }
.pre { font: 700 9.500px "Noto Sans", sans-serif; text-anchor: middle; letter-spacing: .4px; }
.w { font: 700 14px "Noto Sans", sans-serif; text-anchor: middle; fill: #fff; }
.tray { display: flex; align-items: center; margin-left: auto; padding-right: 32px; }
.cloud { margin-left: 27px; }
.wifi { margin-left: 23px; }
.vol { margin-left: 12px; }
.bat { margin-left: 11px; }
.clock { width: 102px; display: flex; flex-direction: column; text-align: right; font-size: 17.300px; line-height: 24px; letter-spacing: .05px; color: #1b1b1b; white-space: nowrap; }
.bell { margin-left: 12px; }
```
